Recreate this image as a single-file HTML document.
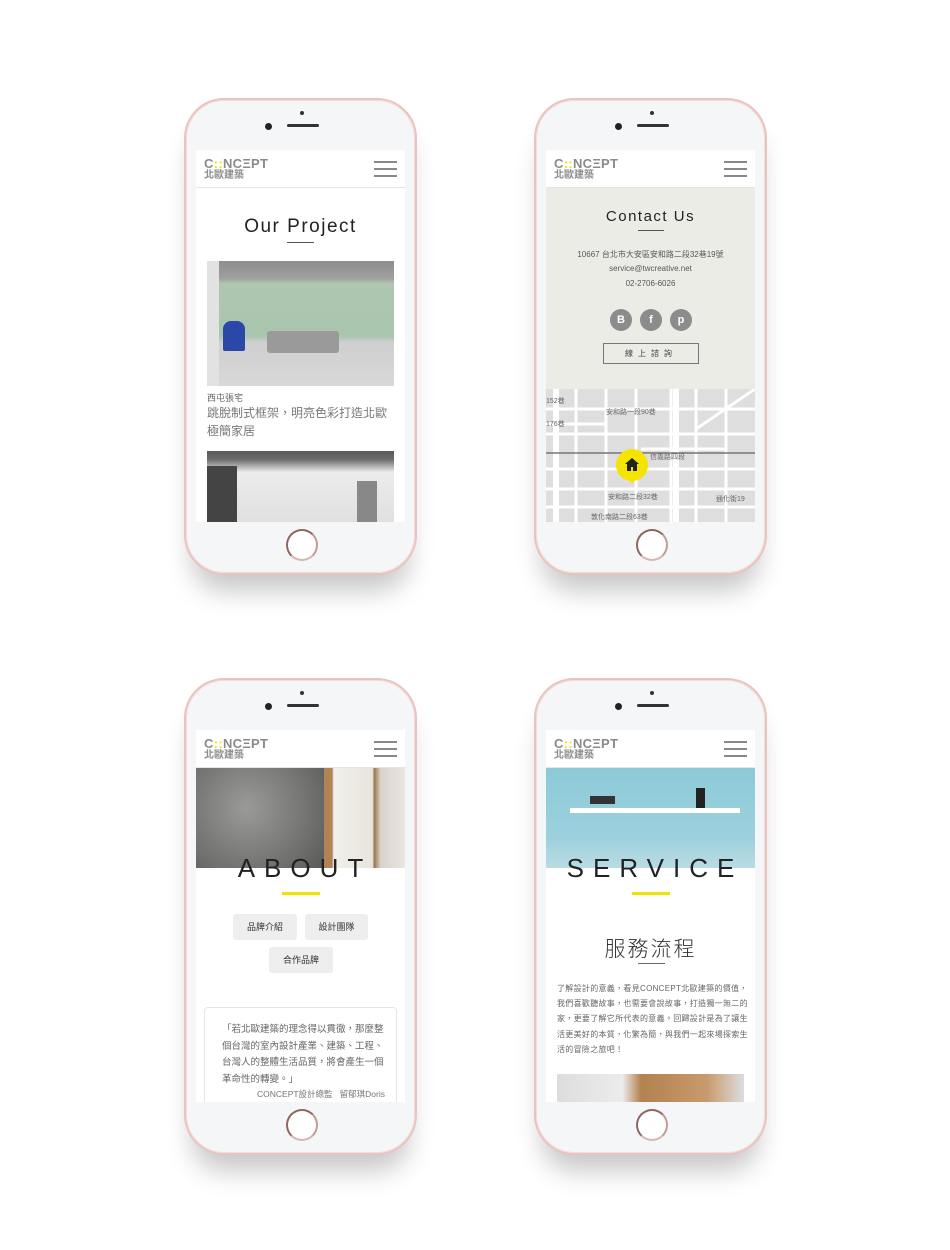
<!DOCTYPE html>
<html><head><meta charset="utf-8">
<style>
*{margin:0;padding:0;box-sizing:border-box}
body{width:950px;height:1250px;background:#fff;position:relative;overflow:hidden;font-family:"Liberation Sans","Noto Sans CJK TC",sans-serif}
.ph{position:absolute;width:233px;height:477px;border-radius:40px;background:#f5f6f8;border:2px solid #e9c3bf;box-shadow:0 0 0 1px #f3dcd9 inset,0 24px 26px -8px rgba(0,0,0,.22)}
.ph .dot{position:absolute;left:114px;top:11px;width:4px;height:4px;border-radius:50%;background:#333}
.ph .cam{position:absolute;left:79px;top:23px;width:7px;height:7px;border-radius:50%;background:#222}
.ph .spk{position:absolute;left:101px;top:24px;width:32px;height:3px;border-radius:2px;background:#333}
.ph .home{position:absolute;left:100px;top:429px;width:32px;height:32px;border-radius:50%;border:2px solid #8f6660;border-bottom-color:#d9b6b2;border-right-color:#c49a94;background:#fff}
.scr{position:absolute;left:10px;top:50px;width:209px;height:372px;background:#fff;overflow:hidden}
.hd{position:absolute;left:0;top:0;width:209px;height:38px;border-bottom:1px solid #e6e6e6;background:#fff}
.logo{position:absolute;left:8px;top:7px;color:#8a8a8a;font-size:13px;font-weight:bold;letter-spacing:.3px;line-height:13px}
.logo b{color:#f2e200;font-weight:bold}
.logo small{display:block;font-size:10px;font-weight:bold;line-height:11px;letter-spacing:0}
.hb{position:absolute;left:178px;width:23px;height:2px;background:#888}
.t{position:absolute;left:0;width:209px;text-align:center}
.ab{position:absolute}
</style></head><body>

<!-- Phone 1 -->
<div class="ph" style="left:184px;top:98px">
<div class="dot"></div><div class="cam"></div><div class="spk"></div><div class="home"></div>
<div class="scr">
 <div class="hd"><div class="logo">C<b>::</b>NC<span>Ξ</span>PT<small>北歐建築</small></div>
 <div class="hb" style="top:11px"></div><div class="hb" style="top:18px"></div><div class="hb" style="top:25px"></div></div>
 <div class="t" style="top:66px;font-size:19px;letter-spacing:1.5px;color:#222">Our Project</div>
 <div class="ab" style="left:91px;top:92px;width:27px;height:1px;background:#555"></div>
 <div class="ab" style="left:11px;top:111px;width:187px;height:125px;background:linear-gradient(180deg,#8d8d8d 0,#a0a0a0 14%,#aec6b0 18%,#a9c5ad 60%,#cfcfcf 65%,#d8d8d8 100%)">
  <div class="ab" style="left:0;top:0;width:12px;height:125px;background:#e2e2e2"></div>
  <div class="ab" style="left:60px;top:70px;width:72px;height:22px;background:#9a9a9a;border-radius:3px"></div>
  <div class="ab" style="left:16px;top:60px;width:22px;height:30px;background:#2b48a8;border-radius:8px 8px 2px 2px"></div>
 </div>
 <div class="ab" style="left:11px;top:241px;font-size:9px;color:#666">西屯張宅</div>
 <div class="ab" style="left:11px;top:254px;font-size:12px;line-height:18px;color:#777;width:190px">跳脫制式框架，明亮色彩打造北歐極簡家居</div>
 <div class="ab" style="left:11px;top:301px;width:187px;height:71px;background:linear-gradient(180deg,#5a5a5a 0,#6c6c6c 12%,#ececec 30%,#e0e0e0 100%)">
  <div class="ab" style="left:0;top:15px;width:30px;height:56px;background:#444"></div>
  <div class="ab" style="left:150px;top:30px;width:20px;height:41px;background:#888"></div>
 </div>
</div></div>

<!-- Phone 2 -->
<div class="ph" style="left:534px;top:98px">
<div class="dot"></div><div class="cam"></div><div class="spk"></div><div class="home"></div>
<div class="scr">
 <div class="hd"><div class="logo">C<b>::</b>NC<span>Ξ</span>PT<small>北歐建築</small></div>
 <div class="hb" style="top:11px"></div><div class="hb" style="top:18px"></div><div class="hb" style="top:25px"></div></div>
 <div class="ab" style="left:0;top:38px;width:209px;height:201px;background:#ecece7"></div>
 <div class="t" style="top:58px;font-size:15px;letter-spacing:1.5px;color:#222">Contact Us</div>
 <div class="ab" style="left:92px;top:80px;width:26px;height:1px;background:#555"></div>
 <div class="t" style="top:99px;font-size:8px;color:#555">10667 台北市大安區安和路二段32巷19號</div>
 <div class="t" style="top:114px;font-size:8px;color:#555">service@twcreative.net</div>
 <div class="t" style="top:129px;font-size:8px;color:#555">02-2706-6026</div>
 <div class="ab" style="left:64px;top:159px;width:22px;height:22px;border-radius:50%;background:#8c8c8c;color:#fff;font-size:11px;font-weight:bold;text-align:center;line-height:22px">B</div>
 <div class="ab" style="left:94px;top:159px;width:22px;height:22px;border-radius:50%;background:#8c8c8c;color:#fff;font-size:11px;font-weight:bold;text-align:center;line-height:22px">f</div>
 <div class="ab" style="left:124px;top:159px;width:22px;height:22px;border-radius:50%;background:#8c8c8c;color:#fff;font-size:11px;font-weight:bold;text-align:center;line-height:22px">p</div>
 <div class="ab" style="left:57px;top:193px;width:96px;height:21px;border:1px solid #777;font-size:8px;color:#444;text-align:center;line-height:19px;letter-spacing:5px">線上諮詢</div>
 <div class="ab" style="left:0;top:239px;width:209px;height:133px;background:#dedede;overflow:hidden">
  <svg width="209" height="133" style="position:absolute;left:0;top:0">
   <g stroke="#fff" stroke-width="3" fill="none">
    <path d="M0 20H209M0 45H209M0 80H209M0 100H209M0 118H209M30 0V133M60 0V133M90 0V133M125 0V133M150 0V133M180 0V133M0 35H60M95 60H180M150 40L209 0"/>
   </g>
   <g stroke="#fff" stroke-width="6"><path d="M10 0V133M130 0V133"/></g>
   <path d="M0 64H209" stroke="#777" stroke-width="1.5"/>
   <g font-size="7" fill="#666"><text x="60" y="25">安和路一段90巷</text><text x="0" y="14">152巷</text><text x="0" y="37">176巷</text><text x="62" y="110">安和路二段32巷</text><text x="45" y="130">敦化南路二段63巷</text><text x="104" y="70">信義路四段</text><text x="170" y="112">通化街19</text></g>
  </svg>
  <div class="ab" style="left:70px;top:60px;width:32px;height:32px;border-radius:50%;background:#f5e400"></div>
  <div class="ab" style="left:82px;top:89px;width:0;height:0;border-left:4px solid transparent;border-right:4px solid transparent;border-top:6px solid #f5e400"></div>
  <svg class="ab" style="left:79px;top:69px" width="14" height="13"><path d="M7 0L14 6H12V13H8V9H6V13H2V6H0Z" fill="#222"/></svg>
 </div>
</div></div>

<!-- Phone 3 -->
<div class="ph" style="left:184px;top:678px">
<div class="dot"></div><div class="cam"></div><div class="spk"></div><div class="home"></div>
<div class="scr">
 <div class="hd"><div class="logo">C<b>::</b>NC<span>Ξ</span>PT<small>北歐建築</small></div>
 <div class="hb" style="top:11px"></div><div class="hb" style="top:18px"></div><div class="hb" style="top:25px"></div></div>
 <div class="ab" style="left:0;top:38px;width:209px;height:100px;background:#ddd">
  <div class="ab" style="left:0;top:0;width:128px;height:100px;background:radial-gradient(circle at 40% 40%,#9a9a98,#6e6e6c 70%,#585856)"></div>
  <div class="ab" style="left:128px;top:0;width:81px;height:100px;background:linear-gradient(90deg,#b08456 0,#b08456 10%,#f2f0ec 12%,#e8e4dc 60%,#9c7650 62%,#d9d3ca 70%,#eae6e0 100%)"></div>
 </div>
 <div class="t" style="top:123px;font-size:26px;letter-spacing:9px;padding-left:9px;color:#222;font-weight:300">ABOUT</div>
 <div class="ab" style="left:86px;top:162px;width:38px;height:3px;background:#f2e200"></div>
 <div class="ab" style="left:37px;top:184px;width:64px;height:26px;background:#eee;border-radius:3px;font-size:9px;color:#333;text-align:center;line-height:26px">品牌介紹</div>
 <div class="ab" style="left:109px;top:184px;width:63px;height:26px;background:#eee;border-radius:3px;font-size:9px;color:#333;text-align:center;line-height:26px">設計團隊</div>
 <div class="ab" style="left:73px;top:217px;width:64px;height:26px;background:#eee;border-radius:3px;font-size:9px;color:#333;text-align:center;line-height:26px">合作品牌</div>
 <div class="ab" style="left:8px;top:277px;width:193px;height:110px;border:1px solid #e4e4e4;border-radius:4px">
  <div class="ab" style="left:17px;top:14px;width:162px;font-size:9.5px;line-height:16.5px;color:#666">「若北歐建築的理念得以貫徹，那麼整個台灣的室內設計產業、建築、工程、台灣人的整體生活品質，將會產生一個革命性的轉變。」</div>
  <div class="ab" style="left:52px;top:80px;font-size:8.5px;color:#777;white-space:nowrap">CONCEPT設計總監 &nbsp; 留郁琪Doris</div>
 </div>
</div></div>

<!-- Phone 4 -->
<div class="ph" style="left:534px;top:678px">
<div class="dot"></div><div class="cam"></div><div class="spk"></div><div class="home"></div>
<div class="scr">
 <div class="hd"><div class="logo">C<b>::</b>NC<span>Ξ</span>PT<small>北歐建築</small></div>
 <div class="hb" style="top:11px"></div><div class="hb" style="top:18px"></div><div class="hb" style="top:25px"></div></div>
 <div class="ab" style="left:0;top:38px;width:209px;height:100px;background:linear-gradient(180deg,#8ccad8,#9dd0dc 70%,#b9dce4)">
  <div class="ab" style="left:24px;top:40px;width:170px;height:5px;background:#fff"></div>
  <div class="ab" style="left:44px;top:28px;width:25px;height:8px;background:#333"></div>
  <div class="ab" style="left:150px;top:20px;width:9px;height:20px;background:#222"></div>
 </div>
 <div class="t" style="top:123px;font-size:26px;letter-spacing:9px;padding-left:9px;color:#222;font-weight:300">SERVICE</div>
 <div class="ab" style="left:86px;top:162px;width:38px;height:3px;background:#f2e200"></div>
 <div class="t" style="top:203px;font-size:21px;letter-spacing:2px;color:#333;font-weight:300">服務流程</div>
 <div class="ab" style="left:92px;top:233px;width:27px;height:1px;background:#666"></div>
 <div class="ab" style="left:11px;top:251px;width:191px;font-size:8px;letter-spacing:.3px;line-height:15.2px;color:#666">了解設計的意義，看見CONCEPT北歐建築的價值，我們喜歡聽故事，也需要會說故事，打造獨一無二的家，更要了解它所代表的意義。回歸設計是為了讓生活更美好的本質，化繁為簡，與我們一起來場探索生活的冒險之旅吧！</div>
 <div class="ab" style="left:11px;top:344px;width:187px;height:28px;background:linear-gradient(90deg,#ddd 0,#ececec 35%,#b48150 45%,#c89a6c 80%,#ddd 100%)"></div>
</div></div>

</body></html>
